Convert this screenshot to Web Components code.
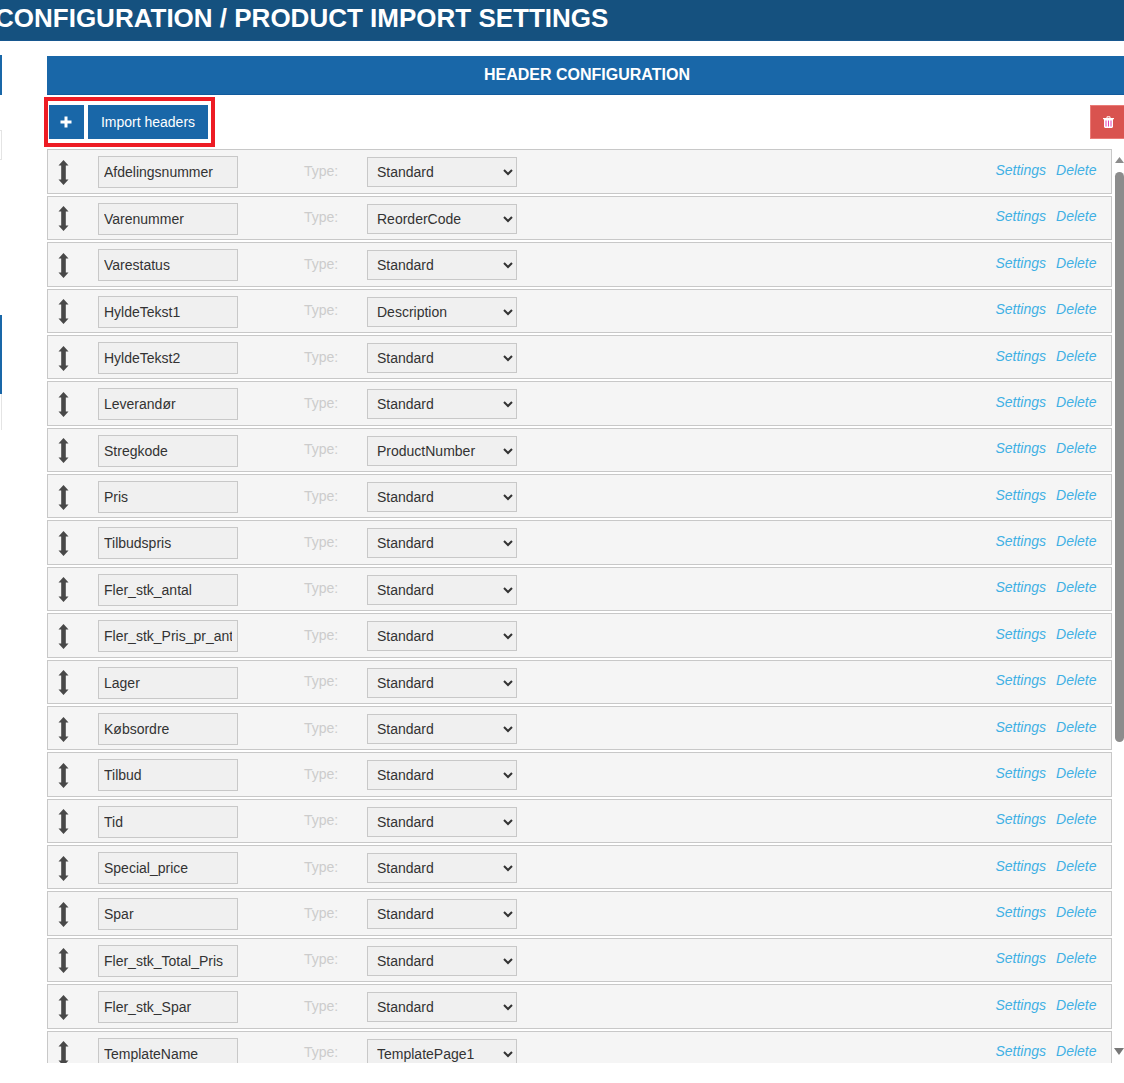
<!DOCTYPE html>
<html lang="en">
<head>
  <meta charset="UTF-8">
  <title>Product Import Settings</title>
  <style>
    html, body { margin: 0; height: 1083px; overflow: hidden; background: #fff; }
    body { font-family: "Liberation Sans", Arial, sans-serif; font-size: 14px; color: #333; }
  </style>
</head>
<body>
  <settings-page>
    <span slot="title">CONFIGURATION / PRODUCT IMPORT SETTINGS</span>
    <span slot="section">HEADER CONFIGURATION</span>
    <header-row type="Standard">Afdelingsnummer</header-row>
    <header-row type="ReorderCode">Varenummer</header-row>
    <header-row type="Standard">Varestatus</header-row>
    <header-row type="Description">HyldeTekst1</header-row>
    <header-row type="Standard">HyldeTekst2</header-row>
    <header-row type="Standard">Leverandør</header-row>
    <header-row type="ProductNumber">Stregkode</header-row>
    <header-row type="Standard">Pris</header-row>
    <header-row type="Standard">Tilbudspris</header-row>
    <header-row type="Standard">Fler_stk_antal</header-row>
    <header-row type="Standard">Fler_stk_Pris_pr_antal</header-row>
    <header-row type="Standard">Lager</header-row>
    <header-row type="Standard">Købsordre</header-row>
    <header-row type="Standard">Tilbud</header-row>
    <header-row type="Standard">Tid</header-row>
    <header-row type="Standard">Special_price</header-row>
    <header-row type="Standard">Spar</header-row>
    <header-row type="Standard">Fler_stk_Total_Pris</header-row>
    <header-row type="Standard">Fler_stk_Spar</header-row>
    <header-row type="TemplatePage1">TemplateName</header-row>
  </settings-page>

  <script>
    // Page frame: title bar, left rail, section heading, toolbar and the row list
    class SettingsPage extends HTMLElement {
      constructor() {
        super();
        this.attachShadow({ mode: 'open' });
        this.shadowRoot.innerHTML = `
          <style>
            :host { display: block; height: 1083px; overflow: hidden; }
            .title {
              height: 41px; overflow: hidden; white-space: nowrap; box-sizing: border-box;
              background: #15517f; border-bottom: 1px solid #17578f; color: #fff;
              font-size: 26px; font-weight: bold; line-height: 36px;
              margin-bottom: 14px; text-indent: -5px;
            }
            .columns { display: flex; }
            .rail { width: 47px; flex: none; display: flex; flex-direction: column; }
            .rail i { display: block; }
            .rail .a { width: 2px; height: 40px; background: #1967a8; }
            .rail .b { width: 1px; height: 28px; margin-top: 35px; border: 1px solid #e4e4e4; border-left: 0; }
            .rail .c { width: 2px; height: 79px; margin-top: 155px; background: #1967a8; }
            .rail .d { width: 1px; height: 36px; margin-left: 1px; background: #e4e4e4; }
            .main { flex: 1; min-width: 0; }
            .section {
              height: 39px; margin-top: 1px; box-sizing: border-box;
              background: #1967a8; border-bottom: 1px solid #115a9c;
              color: #fff; font-size: 16px; font-weight: bold; line-height: 37px; text-align: center;
              padding-left: 3px;
            }
            .list { display: flex; height: 913.6px; overflow: hidden; }
            .rows { flex: 1; min-width: 0; }
          </style>
          <div class="title"><slot name="title"></slot></div>
          <div class="columns">
            <div class="rail"><i class="a"></i><i class="b"></i><i class="c"></i><i class="d"></i></div>
            <div class="main">
              <div class="section"><slot name="section"></slot></div>
              <header-toolbar></header-toolbar>
              <div class="list">
                <div class="rows"><slot></slot></div>
                <fake-scrollbar></fake-scrollbar>
              </div>
            </div>
          </div>
        `;
      }
    }

    // Add / import buttons with the red marker round them, delete-all on the right
    class HeaderToolbar extends HTMLElement {
      constructor() {
        super();
        this.attachShadow({ mode: 'open' });
        this.shadowRoot.innerHTML = `
          <style>
            :host { display: flex; position: relative; height: 54.4px; box-sizing: border-box; padding: 10px 0 0 2px; gap: 4px; }
            button {
              height: 34px; box-sizing: border-box; padding: 0; margin: 0;
              border: 1px solid #1967a8; background: #1967a8; color: #fff;
              font: 14px "Liberation Sans", Arial, sans-serif;
            }
            .add { width: 35px; display: flex; align-items: center; justify-content: center; padding-right: 2px; }
            .import { width: 120px; }
            /* the button runs past the right edge of the window, as in the reference */
            .trash {
              width: 37px; margin-left: auto; margin-right: -3px; display: flex; align-items: center; justify-content: center;
              background: #d9534f; border-color: #ea7a76;
            }
            .marker {
              position: absolute; left: -3px; top: 2px; width: 171px; height: 50px;
              box-sizing: border-box; border: 4px solid #ed1c24; pointer-events: none;
            }
          </style>
          <button class="add" type="button" aria-label="Add">
            <svg width="12" height="12" viewBox="0 0 12 12"><path d="M4.500 0.500h3v4h4v3h-4v4h-3v-4h-4v-3h4z" fill="#fff"/></svg>
          </button>
          <button class="import" type="button">Import headers</button>
          <button class="trash" type="button" aria-label="Delete all">
            <svg width="11" height="12" viewBox="0 0 11 12">
              <path d="M3.500 2V1L4.200.3h2.600L7.500 1V2H11V3.200H10V11l-1 1H2L1 11V3.200H0V2zM4.500 2h2V1.200h-2z" fill="#fff" fill-rule="evenodd"/>
              <path d="M3 4.500V10.500M5.500 4.500V10.500M8 4.500V10.500" stroke="#e23fb4" stroke-width="1"/>
            </svg>
          </button>
          <div class="marker"></div>
        `;
      }
    }

    // One header line. The name comes in through the slot, the type from the attribute
    class HeaderRow extends HTMLElement {
      constructor() {
        super();
        this.attachShadow({ mode: 'open' });
        const type = this.getAttribute('type');
        this.shadowRoot.innerHTML = `
          <style>
            :host {
              display: flex; align-items: flex-start; box-sizing: border-box;
              height: 44.38px; margin-bottom: 2px; width: 1065px;
              border: 1px solid #c8c8c8; background: #f5f5f5; color: #333;
              font: 14px "Liberation Sans", Arial, sans-serif;
            }
            .handle { width: 50px; flex: none; padding: 9.700px 0 0 10px; box-sizing: border-box; }
            .handle svg { display: block; }
            .name {
              width: 140px; height: 32px; flex: none; box-sizing: border-box; margin-top: 6px;
              padding: 0 5px; border: 1px solid #c8c8c8; background: #f0f0f0;
              line-height: 30px;
            }
            .name div { white-space: nowrap; overflow: hidden; }
            .type { width: 129px; flex: none; padding: 12.700px 0 0 66px; box-sizing: border-box; color: #ccc; line-height: 16px; }
            select {
              width: 150px; height: 30px; flex: none; margin: 7px 0 0; box-sizing: border-box;
              padding: 0 0 0 5px; border: 1px solid #c8c8c8; border-radius: 0; background-color: #f0f0f0; color: #333;
              font: 14px "Liberation Sans", Arial, sans-serif;
            }
            .links { margin-left: auto; padding: 11.700px 14.500px 0 0; display: flex; gap: 10px; line-height: 16px; font-style: italic; }
            a { color: #3fb0e4; text-decoration: none; }
          </style>
          <div class="handle">
            <svg width="11" height="25" viewBox="0 0 11 25"><path d="M5.500 0L10.500 5.500H7.800V19.500H10.500L5.500 25L.5 19.500H3.200V5.500H.5Z" fill="#484848"/></svg>
          </div>
          <div class="name"><div><slot></slot></div></div>
          <div class="type">Type:</div>
          <select aria-label="Type"><option>${type}</option></select>
          <div class="links"><a href="#">Settings</a><a href="#">Delete</a></div>
        `;
      }
    }

    // Drawn scrollbar: the list is clipped and the thumb sits where the reference has it
    class FakeScrollbar extends HTMLElement {
      constructor() {
        super();
        this.attachShadow({ mode: 'open' });
        this.shadowRoot.innerHTML = `
          <style>
            :host { display: flex; flex-direction: column; align-items: flex-end; width: 10px; flex: none; background: #fff; }
            svg { display: block; flex: none; }
            .up { margin-top: 8px; }
            .thumb { width: 9px; height: 570px; margin-top: 9px; border-radius: 5px; background: #8c8c8c; }
            .down { margin-top: auto; margin-bottom: 8px; }
          </style>
          <svg class="up" width="9" height="6" viewBox="0 0 9 6"><path d="M4.500 0L9 6H0Z" fill="#8c8c8c"/></svg>
          <div class="thumb"></div>
          <svg class="down" width="10" height="7" viewBox="0 0 10 7"><path d="M0 0H10L5 7Z" fill="#777"/></svg>
        `;
      }
    }

    customElements.define('settings-page', SettingsPage);
    customElements.define('header-toolbar', HeaderToolbar);
    customElements.define('header-row', HeaderRow);
    customElements.define('fake-scrollbar', FakeScrollbar);
  </script>
</body>
</html>
